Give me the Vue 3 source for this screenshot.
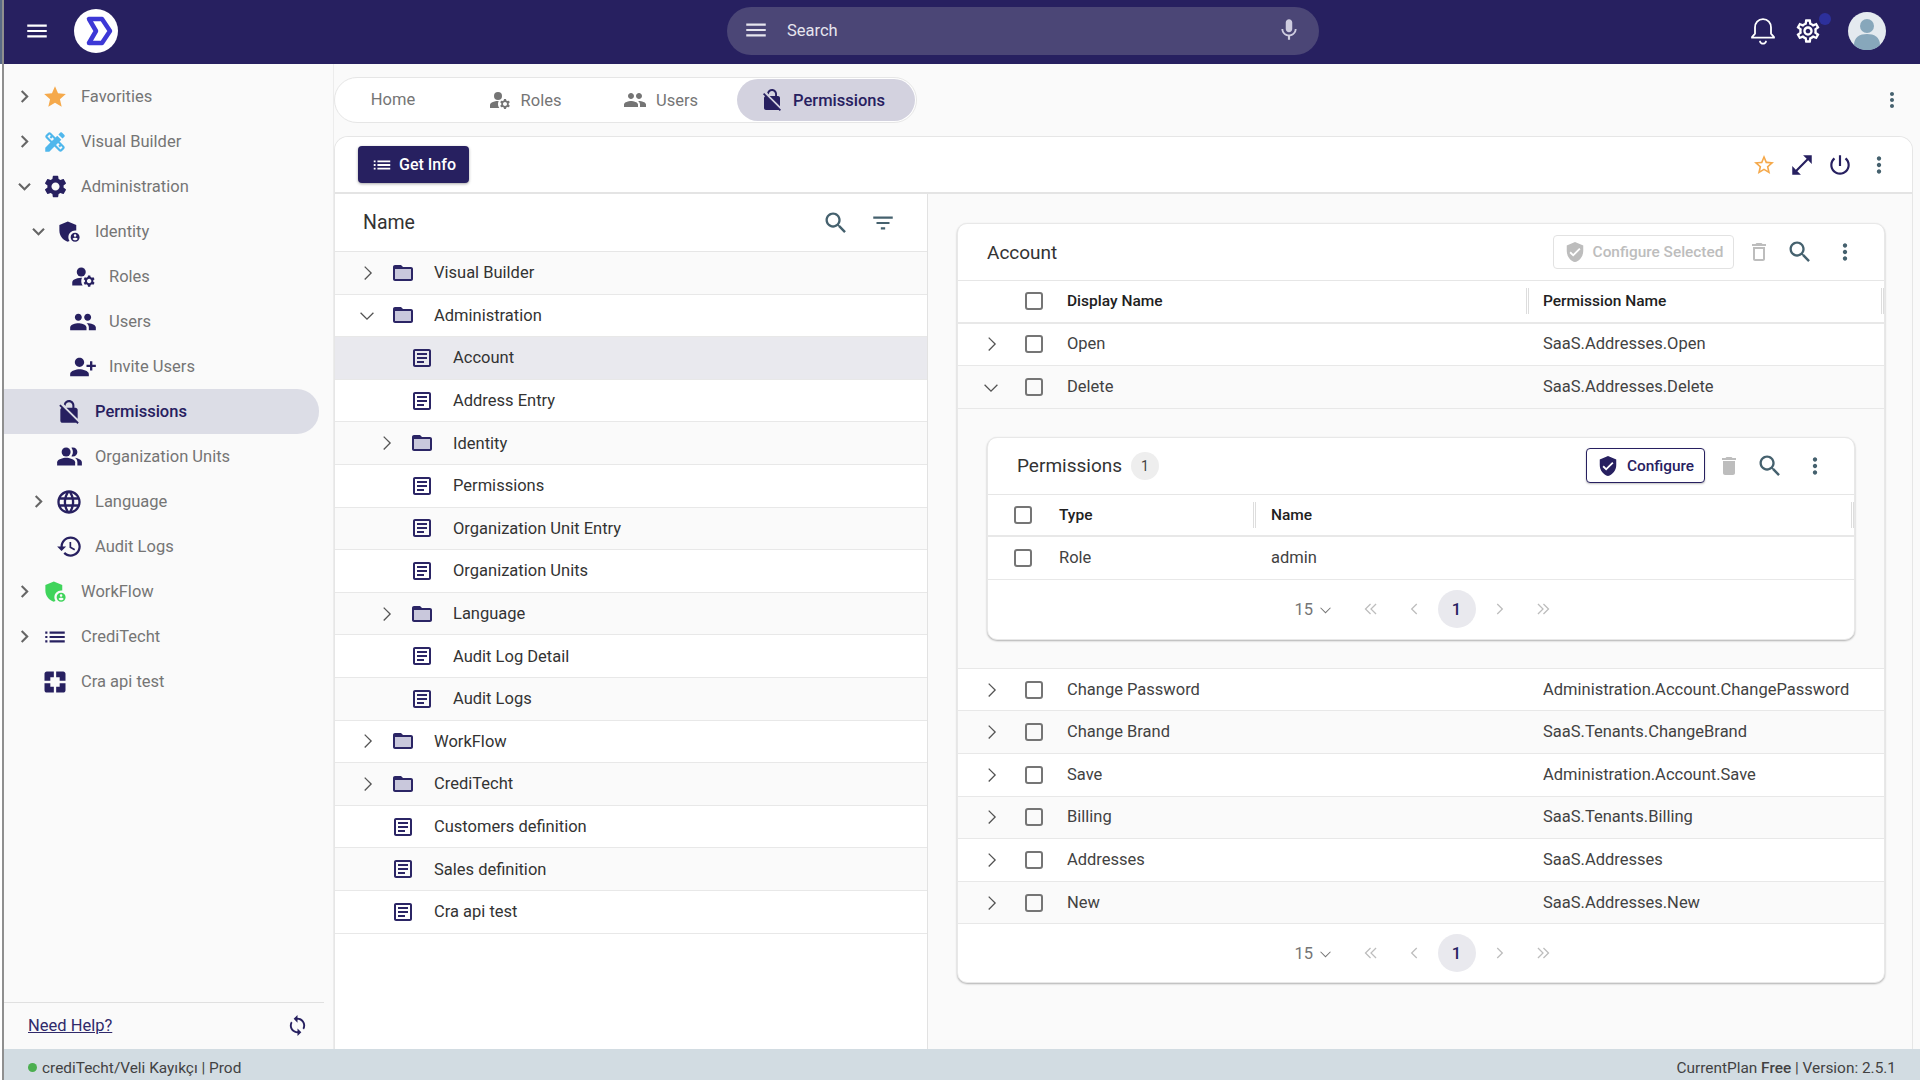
<script setup>
import { h } from 'vue'

const paths = {
  menu: ['M3 18h18v-2H3v2zm0-5h18v-2H3v2zm0-7v2h18V6H3z'],
  chevron: ['M10 6L8.59 7.41 13.17 12l-4.58 4.59L10 18l6-6z'],
  thin: ['M9 5.5l1-1L17.5 12 10 19.5l-1-1 6.5-6.5z'],
  star: ['M12 17.27L18.18 21l-1.64-7.03L22 9.24l-7.19-.61L12 2 9.19 8.63 2 9.24l5.46 4.73L5.82 21z'],
  starLine: ['M22 9.24l-7.19-.62L12 2 9.19 8.63 2 9.24l5.46 4.73L5.82 21 12 17.27 18.18 21l-1.63-7.03L22 9.24zM12 15.4l-3.76 2.27 1-4.28-3.32-2.88 4.38-.38L12 6.1l1.71 4.04 4.38.38-3.32 2.88 1 4.28L12 15.4z'],
  builder: ['M16.24 11.51l1.57-1.57-3.75-3.75-1.57 1.57-4.14-4.13c-.78-.78-2.05-.78-2.83 0l-1.9 1.9c-.78.78-.78 2.05 0 2.83l4.13 4.13L3 17.25V21h3.75l4.76-4.76 4.13 4.13c.95.95 2.23.6 2.83 0l1.9-1.9c.78-.78.78-2.05 0-2.83l-4.13-4.13zm-7.06-.44L5.04 6.94l1.89-1.9L8.2 6.31 7.02 7.5l1.41 1.41 1.19-1.19 1.45 1.45-1.89 1.9zm7.88 7.89l-4.13-4.14 1.9-1.9 1.45 1.45-1.19 1.19 1.41 1.41 1.19-1.19 1.27 1.27-1.9 1.91zM20.71 7.04c.39-.39.39-1.02 0-1.41l-2.34-2.34c-.47-.47-1.12-.29-1.41 0l-1.83 1.83 3.75 3.75 1.83-1.83z'],
  gear: ['M19.14 12.94c.04-.3.06-.61.06-.94 0-.32-.02-.64-.07-.94l2.03-1.58c.18-.14.23-.41.12-.61l-1.92-3.32c-.12-.22-.37-.29-.59-.22l-2.39.96c-.5-.38-1.03-.7-1.62-.94l-.36-2.54c-.04-.24-.24-.41-.48-.41h-3.84c-.24 0-.43.17-.47.41l-.36 2.54c-.59.24-1.13.57-1.62.94l-2.39-.96c-.22-.08-.47 0-.59.22L2.74 8.87c-.12.21-.08.47.12.61l2.03 1.58c-.05.3-.09.63-.09.94s.02.64.07.94l-2.03 1.58c-.18.14-.23.41-.12.61l1.92 3.32c.12.22.37.29.59.22l2.39-.96c.5.38 1.03.7 1.62.94l.36 2.54c.05.24.24.41.48.41h3.84c.24 0 .44-.17.47-.41l.36-2.54c.59-.24 1.13-.56 1.62-.94l2.39.96c.22.08.47 0 .59-.22l1.92-3.32c.12-.22.07-.47-.12-.61l-2.01-1.58zM12 15.6c-1.98 0-3.6-1.62-3.6-3.6s1.62-3.6 3.6-3.6 3.6 1.62 3.6 3.6-1.62 3.6-3.6 3.6z'],
  gearLine: ['M19.43 12.98c.04-.32.07-.64.07-.98 0-.34-.03-.66-.07-.98l2.11-1.65c.19-.15.24-.42.12-.64l-2-3.46c-.09-.16-.26-.25-.44-.25-.06 0-.12.01-.17.03l-2.49 1c-.52-.4-1.08-.73-1.69-.98l-.38-2.65C14.46 2.18 14.25 2 14 2h-4c-.25 0-.46.18-.49.42l-.38 2.65c-.61.25-1.17.59-1.69.98l-2.49-1c-.06-.02-.12-.03-.18-.03-.17 0-.34.09-.43.25l-2 3.46c-.13.22-.07.49.12.64l2.11 1.65c-.04.32-.07.65-.07.98 0 .33.03.66.07.98l-2.11 1.65c-.19.15-.24.42-.12.64l2 3.46c.09.16.26.25.44.25.06 0 .12-.01.17-.03l2.49-1c.52.4 1.08.73 1.69.98l.38 2.65c.03.24.24.42.49.42h4c.25 0 .46-.18.49-.42l.38-2.65c.61-.25 1.17-.59 1.69-.98l2.49 1c.06.02.12.03.18.03.17 0 .34-.09.43-.25l2-3.46c.12-.22.07-.49-.12-.64l-2.11-1.65zm-1.98-1.71c.04.31.05.52.05.73 0 .21-.02.43-.05.73l-.14 1.13.89.7 1.08.84-.7 1.21-1.27-.51-1.04-.42-.9.68c-.43.32-.84.56-1.25.73l-1.06.43-.16 1.13-.2 1.35h-1.4l-.19-1.35-.16-1.13-1.06-.43c-.43-.18-.83-.41-1.23-.71l-.91-.7-1.06.43-1.27.51-.7-1.21 1.08-.84.89-.7-.14-1.13c-.03-.31-.05-.54-.05-.74s.02-.43.05-.73l.14-1.13-.89-.7-1.08-.84.7-1.21 1.27.51 1.04.42.9-.68c.43-.32.84-.56 1.25-.73l1.06-.43.16-1.13.2-1.35h1.39l.19 1.35.16 1.13 1.06.43c.43.18.83.41 1.23.71l.91.7 1.06-.43 1.27-.51.7 1.21-1.07.85-.89.7.14 1.13zM12 8c-2.21 0-4 1.79-4 4s1.79 4 4 4 4-1.79 4-4-1.79-4-4-4zm0 6c-1.1 0-2-.9-2-2s.9-2 2-2 2 .9 2 2-.9 2-2 2z'],
  shield: [
    'M17 11c.34 0 .67.04 1 .09V6.27L10.5 3 3 6.27v4.91c0 4.54 3.2 8.79 7.5 9.82.55-.13 1.08-.32 1.6-.55-.69-.98-1.1-2.17-1.1-3.45 0-3.31 2.69-6 6-6z',
    'M17 13c-2.21 0-4 1.79-4 4s1.79 4 4 4 4-1.79 4-4-1.79-4-4-4zm0 1.38c.62 0 1.12.51 1.12 1.12s-.51 1.12-1.12 1.12-1.12-.51-1.12-1.12.5-1.12 1.12-1.12zm0 5.37c-.93 0-1.74-.46-2.24-1.17.05-.72 1.51-1.08 2.24-1.08s2.19.36 2.24 1.08c-.5.71-1.31 1.17-2.24 1.17z'
  ],
  roles: [
    'M10 4a4 4 0 1 0 0 8 4 4 0 0 0 0-8z',
    'M10.67 13.02c-.22-.01-.44-.02-.67-.02-2.42 0-4.68.67-6.61 1.82-.88.52-1.39 1.5-1.39 2.53V20h9.26c-.79-1.13-1.26-2.51-1.26-4 0-1.07.25-2.07.67-2.98z',
    'M20.75 16c0-.22-.03-.42-.06-.63l1.14-1.01-1-1.73-1.45.49c-.32-.27-.68-.48-1.08-.63L18 11h-2l-.3 1.49c-.4.15-.76.36-1.08.63l-1.45-.49-1 1.73 1.14 1.01c-.03.21-.06.41-.06.63s.03.42.06.63l-1.14 1.01 1 1.73 1.45-.49c.32.27.68.48 1.08.63L16 21h2l.3-1.49c.4-.15.76-.36 1.08-.63l1.45.49 1-1.73-1.14-1.01c.03-.21.06-.41.06-.63zM17 18c-1.1 0-2-.9-2-2s.9-2 2-2 2 .9 2 2-.9 2-2 2z'
  ],
  people: ['M16 11c1.66 0 2.99-1.34 2.99-3S17.66 5 16 5c-1.66 0-3 1.34-3 3s1.34 3 3 3zm-8 0c1.66 0 2.99-1.34 2.99-3S9.66 5 8 5C6.34 5 5 6.34 5 8s1.34 3 3 3zm0 2c-2.33 0-7 1.17-7 3.5V19h14v-2.5c0-2.33-4.67-3.5-7-3.5zm8 0c-.29 0-.62.02-.97.05 1.16.84 1.97 1.97 1.97 3.45V19h6v-2.5c0-2.33-4.67-3.5-7-3.5z'],
  invite: ['M15 12c2.21 0 4-1.79 4-4s-1.79-4-4-4-4 1.79-4 4 1.79 4 4 4zm-9-2V7H4v3H1v2h3v3h2v-3h3v-2H6zm9 4c-2.67 0-8 1.34-8 4v2h16v-2c0-2.66-5.33-4-8-4z'],
  lock: ['M21 21.78L4.22 5 3 6.22l2.04 2.04C4.42 8.6 4 9.25 4 10v10c0 1.1.9 2 2 2h12c.23 0 .45-.05.66-.12L19.78 23 21 21.78zM8.9 6c0-1.71 1.39-3.1 3.1-3.1s3.1 1.39 3.1 3.1v2H9.66L20 18.34V10c0-1.1-.9-2-2-2h-1V6c0-2.76-2.24-5-5-5-2.32 0-4.26 1.59-4.82 3.74L8.9 6.46V6z'],
  units: [
    'M16.67 13.13C18.04 14.06 19 15.32 19 17v3h4v-3c0-2.18-3.57-3.47-6.33-3.87z',
    'M9 4a4 4 0 1 0 0 8 4 4 0 0 0 0-8z',
    'M15 12c2.21 0 4-1.79 4-4s-1.79-4-4-4c-.47 0-.91.1-1.33.24C14.5 5.27 15 6.58 15 8s-.5 2.73-1.33 3.76c.42.14.86.24 1.33.24z',
    'M9 13c-2.67 0-8 1.34-8 4v3h16v-3c0-2.66-5.33-4-8-4z'
  ],
  globe: ['M11.99 2C6.47 2 2 6.48 2 12s4.47 10 9.99 10C17.52 22 22 17.52 22 12S17.52 2 11.99 2zm6.93 6h-2.95c-.32-1.25-.78-2.45-1.38-3.56 1.84.63 3.37 1.91 4.33 3.56zM12 4.04c.83 1.2 1.48 2.53 1.91 3.96h-3.82c.43-1.43 1.08-2.76 1.91-3.96zM4.26 14C4.1 13.36 4 12.69 4 12s.1-1.36.26-2h3.38c-.08.66-.14 1.32-.14 2 0 .68.06 1.34.14 2H4.26zm.82 2h2.95c.32 1.25.78 2.45 1.38 3.56-1.84-.63-3.37-1.9-4.33-3.56zm2.95-8H5.08c.96-1.66 2.49-2.93 4.33-3.56C8.81 5.55 8.35 6.75 8.03 8zM12 19.96c-.83-1.2-1.48-2.53-1.91-3.96h3.82c-.43 1.43-1.08 2.76-1.91 3.96zM14.34 14H9.66c-.09-.66-.16-1.32-.16-2 0-.68.07-1.35.16-2h4.68c.09.65.16 1.32.16 2 0 .68-.07 1.34-.16 2zm.25 5.56c.6-1.11 1.06-2.31 1.38-3.56h2.95c-.96 1.65-2.49 2.93-4.33 3.56zM16.36 14c.08-.66.14-1.32.14-2 0-.68-.06-1.34-.14-2h3.38c.16.64.26 1.31.26 2s-.1 1.36-.26 2h-3.38z'],
  history: ['M13 3c-4.97 0-9 4.03-9 9H1l3.89 3.89.07.14L9 12H6c0-3.87 3.13-7 7-7s7 3.13 7 7-3.13 7-7 7c-1.93 0-3.68-.79-4.94-2.06l-1.42 1.42C8.27 19.99 10.51 21 13 21c4.97 0 9-4.03 9-9s-4.03-9-9-9zm-1 5v5l4.28 2.54.72-1.21-3.5-2.08V8H12z'],
  list: ['M3 13h2v-2H3v2zm0 4h2v-2H3v2zm0-8h2V7H3v2zm4 4h14v-2H7v2zm0 4h14v-2H7v2zM7 7v2h14V7H7z'],
  craTest: [
    'M5 3h6v5H8v3H3V5c0-1.1.9-2 2-2z',
    'M13 3h6c1.1 0 2 .9 2 2v6h-5V8h-3z',
    'M3 13h5v3h3v5H5c-1.1 0-2-.9-2-2z',
    'M16 13h5v6c0 1.1-.9 2-2 2h-6v-5h3z'
  ],
  sync: ['M12 4V1L8 5l4 4V6c3.31 0 6 2.69 6 6 0 1.01-.25 1.97-.7 2.8l1.46 1.46C19.54 15.03 20 13.57 20 12c0-4.42-3.58-8-8-8zm0 14c-3.31 0-6-2.69-6-6 0-1.01.25-1.97.7-2.8L5.24 7.74C4.46 8.97 4 10.43 4 12c0 4.42 3.58 8 8 8v3l4-4-4-4v3z'],
  search: ['M15.5 14h-.79l-.28-.27C15.41 12.59 16 11.11 16 9.5 16 5.91 13.09 3 9.5 3S3 5.91 3 9.5 5.91 16 9.5 16c1.61 0 3.09-.59 4.23-1.57l.27.28v.79l5 4.99L20.49 19l-4.99-5zm-6 0C7.01 14 5 11.99 5 9.5S7.01 5 9.5 5 14 7.01 14 9.5 11.99 14 9.5 14z'],
  filter: ['M10 18h4v-2h-4v2zM3 6v2h18V6H3zm3 7h12v-2H6v2z'],
  kebab: ['M12 8c1.1 0 2-.9 2-2s-.9-2-2-2-2 .9-2 2 .9 2 2 2zm0 2c-1.1 0-2 .9-2 2s.9 2 2 2 2-.9 2-2-.9-2-2-2zm0 6c-1.1 0-2 .9-2 2s.9 2 2 2 2-.9 2-2-.9-2-2-2z'],
  mic: ['M12 14c1.66 0 2.99-1.34 2.99-3L15 5c0-1.66-1.34-3-3-3S9 3.34 9 5v6c0 1.66 1.34 3 3 3zm5.3-3c0 3-2.54 5.1-5.3 5.1S6.7 14 6.7 11H5c0 3.41 2.72 6.23 6 6.72V21h2v-3.28c3.28-.48 6-3.3 6-6.72h-1.7z'],
  power: ['M13 3h-2v10h2V3zm4.83 2.17l-1.42 1.42C17.99 7.86 19 9.81 19 12c0 3.87-3.13 7-7 7s-7-3.13-7-7c0-2.19 1.01-4.14 2.58-5.42L6.17 5.17C4.23 6.82 3 9.26 3 12c0 4.97 4.03 9 9 9s9-4.03 9-9c0-2.74-1.23-5.18-3.17-6.83z'],
  expand: ['M21 11V3h-8l3.29 3.29-10 10L3 13v8h8l-3.29-3.29 10-10z'],
  verified: ['M12 1L3 5v6c0 5.55 3.84 10.74 9 12 5.16-1.26 9-6.45 9-12V5l-9-4zm-2 16l-4-4 1.41-1.41L10 14.17l6.59-6.59L18 9l-8 8z'],
  trash: ['M6 19c0 1.1.9 2 2 2h8c1.1 0 2-.9 2-2V7H6v12zM19 4h-3.5l-1-1h-5l-1 1H5v2h14V4z'],
  trashLine: ['M6 19c0 1.1.9 2 2 2h8c1.1 0 2-.9 2-2V7H6v12zM8 9h8v10H8V9zm7.5-5l-1-1h-5l-1 1H5v2h14V4h-3.5z'],
  article: ['M19 3H5c-1.1 0-2 .9-2 2v14c0 1.1.9 2 2 2h14c1.1 0 2-.9 2-2V5c0-1.1-.9-2-2-2zm0 16H5V5h14v14z', 'M7 7h10v2H7zm0 4h10v2H7zm0 4h7v2H7z'],
  left: ['M14.5 6l1 1-5 5 5 5-1 1-6-6z'],
  dblLeft: ['M11 6l1 1-5 5 5 5-1 1-6-6z', 'M17 6l1 1-5 5 5 5-1 1-6-6z']
}

const Icon = (props) =>
  h(
    'svg',
    { viewBox: '0 0 24 24', width: props.size || 24, height: props.size || 24, fill: 'currentColor' },
    paths[props.name].map((d) => h('path', { d }))
  )
Icon.props = ['name', 'size']

const menuItems = [
  { label: 'Favorities', icon: 'star', level: 0, arrow: 'right', tone: 'orange', size: 26 },
  { label: 'Visual Builder', icon: 'builder', level: 0, arrow: 'right', tone: 'sky', size: 26 },
  { label: 'Administration', icon: 'gear', level: 0, arrow: 'down', size: 27 },
  { label: 'Identity', icon: 'shield', level: 1, arrow: 'down', size: 27 },
  { label: 'Roles', icon: 'roles', level: 2, size: 27 },
  { label: 'Users', icon: 'people', level: 2, size: 28 },
  { label: 'Invite Users', icon: 'invite', level: 2, size: 28, flip: true },
  { label: 'Permissions', icon: 'lock', level: 1, active: true, size: 26 },
  { label: 'Organization Units', icon: 'units', level: 1, size: 27 },
  { label: 'Language', icon: 'globe', level: 1, arrow: 'right', size: 28 },
  { label: 'Audit Logs', icon: 'history', level: 1, size: 27 },
  { label: 'WorkFlow', icon: 'shield', level: 0, arrow: 'right', tone: 'green', size: 27 },
  { label: 'CrediTecht', icon: 'list', level: 0, arrow: 'right', size: 26 },
  { label: 'Cra api test', icon: 'craTest', level: 0, size: 28 }
]

const tabs = [
  { label: 'Home', cls: 'tab-home' },
  { label: 'Roles', icon: 'roles', cls: 'tab-roles' },
  { label: 'Users', icon: 'people', cls: 'tab-users' },
  { label: 'Permissions', icon: 'lock', cls: 'tab-perm', active: true }
]

const treeItems = [
  { label: 'Visual Builder', level: 0, folder: true, arrow: 'right' },
  { label: 'Administration', level: 0, folder: true, arrow: 'down' },
  { label: 'Account', level: 1, selected: true },
  { label: 'Address Entry', level: 1 },
  { label: 'Identity', level: 1, folder: true, arrow: 'right' },
  { label: 'Permissions', level: 1 },
  { label: 'Organization Unit Entry', level: 1 },
  { label: 'Organization Units', level: 1 },
  { label: 'Language', level: 1, folder: true, arrow: 'right' },
  { label: 'Audit Log Detail', level: 1 },
  { label: 'Audit Logs', level: 1 },
  { label: 'WorkFlow', level: 0, folder: true, arrow: 'right' },
  { label: 'CrediTecht', level: 0, folder: true, arrow: 'right' },
  { label: 'Customers definition', level: 0 },
  { label: 'Sales definition', level: 0 },
  { label: 'Cra api test', level: 0 }
]

const permissionRows = [
  { name: 'Open', key: 'SaaS.Addresses.Open' },
  { name: 'Delete', key: 'SaaS.Addresses.Delete', open: true },
  { name: 'Change Password', key: 'Administration.Account.ChangePassword' },
  { name: 'Change Brand', key: 'SaaS.Tenants.ChangeBrand' },
  { name: 'Save', key: 'Administration.Account.Save' },
  { name: 'Billing', key: 'SaaS.Tenants.Billing' },
  { name: 'Addresses', key: 'SaaS.Addresses' },
  { name: 'New', key: 'SaaS.Addresses.New' }
]
</script>

<template>
  <div class="app">
    <div class="edge"></div>
    <div class="shell">
      <header class="topbar">
        <Icon name="menu" class="top-menu" :size="26" />
        <div class="logo">
          <svg viewBox="0 0 44 44" width="44" height="44">
            <path d="M15 10h13l8 12-8 12H15l7-12z" fill="none" stroke="#3d38d6" stroke-width="4.5" stroke-linejoin="round" />
          </svg>
        </div>
        <div class="search-pill">
          <Icon name="menu" :size="26" />
          <span class="search-text">Search</span>
          <Icon name="mic" class="mic" :size="26" />
        </div>
        <div class="top-right">
          <svg viewBox="0 0 28 30" width="28" height="30" fill="none" stroke="#fff">
            <path d="M14 3.2c-5 0-8 3.8-8 8.3v6.2l-3 3.4v.6h22v-.6l-3-3.4v-6.2c0-4.5-3-8.3-8-8.3z" stroke-width="1.8" stroke-linejoin="round" />
            <path d="M11 25.500c.5 1.500 1.600 2.200 3 2.200s2.500-.7 3-2.200" stroke-width="1.800" stroke-linecap="round" />
          </svg>
          <span class="gear-wrap">
            <Icon name="gearLine" :size="28" />
            <span class="gear-dot"></span>
          </span>
          <span class="avatar">
            <svg viewBox="0 0 38 38" width="38" height="38">
              <circle cx="19" cy="19" r="19" fill="#e4eaef" />
              <circle cx="19" cy="14" r="7" fill="#87a7bb" />
              <path d="M6 33c0-8 6-11 13-11s13 3 13 11a19 19 0 0 1-26 0z" fill="#87a7bb" />
            </svg>
          </span>
        </div>
      </header>

      <div class="body">
        <aside class="sidebar">
          <nav class="menu">
            <div
              v-for="item in menuItems"
              :key="item.label"
              class="menu-row"
              :class="['lv' + item.level, { active: item.active }]"
            >
              <span class="arrow-slot">
                <Icon v-if="item.arrow" name="chevron" :class="{ down: item.arrow === 'down' }" :size="25" />
              </span>
              <span class="menu-icon" :class="item.tone">
                <Icon :name="item.icon" :size="item.size" :class="{ flip: item.flip }" />
              </span>
              <span class="menu-label">{{ item.label }}</span>
            </div>
          </nav>
          <div class="side-foot">
            <a class="help">Need Help?</a>
            <Icon name="sync" :size="23" class="sync" />
          </div>
        </aside>

        <main class="main">
          <div class="tabs-row">
            <div class="tabs">
              <div v-for="tab in tabs" :key="tab.label" class="tab" :class="[tab.cls, { active: tab.active }]">
                <Icon v-if="tab.icon" :name="tab.icon" :size="24" />
                <span>{{ tab.label }}</span>
              </div>
            </div>
            <Icon name="kebab" class="slate tabs-kebab" />
          </div>

          <section class="page">
            <div class="toolbar">
              <button class="get-info">
                <Icon name="list" :size="22" />
                <span>Get Info</span>
              </button>
              <div class="tool-icons">
                <Icon name="starLine" class="orange" :size="24" />
                <Icon name="expand" class="navy tool-expand" :size="26" />
                <Icon name="power" class="navy" :size="26" />
                <Icon name="kebab" class="slate tool-kebab" :size="26" />
              </div>
            </div>

            <div class="split">
              <div class="tree">
                <div class="tree-head">
                  <span class="tree-title">Name</span>
                  <Icon name="search" class="slate tree-search" :size="28" />
                  <Icon name="filter" class="slate tree-filter" :size="26" />
                </div>
                <div
                  v-for="node in treeItems"
                  :key="node.label + node.level"
                  class="tree-row"
                  :class="['tree-lv' + node.level, { selected: node.selected }]"
                >
                  <span class="tree-arrow">
                    <Icon v-if="node.arrow" name="thin" :class="{ down: node.arrow === 'down' }" :size="22" />
                  </span>
                  <span class="tree-icon">
                    <svg v-if="node.folder" viewBox="0 0 24 24" width="24" height="24">
                      <path d="M4 8h16v10H4z" fill="#c9c8dc" />
                      <path fill="#2b2565" d="M20 6h-8l-2-2H4c-1.1 0-1.99.9-1.99 2L2 18c0 1.1.9 2 2 2h16c1.1 0 2-.9 2-2V8c0-1.1-.9-2-2-2zm0 12H4V8h16v10z" />
                    </svg>
                    <Icon v-else name="article" />
                  </span>
                  <span class="tree-label">{{ node.label }}</span>
                </div>
              </div>

              <div class="detail">
                <div class="card">
                  <div class="card-head">
                    <span class="card-title">Account</span>
                    <button class="configure-off">
                      <Icon name="verified" :size="22" />
                      <span>Configure Selected</span>
                    </button>
                    <Icon name="trashLine" class="muted trash-first" :size="24" />
                    <Icon name="search" class="slate gap-search" :size="28" />
                    <Icon name="kebab" class="slate gap-kebab" :size="26" />
                  </div>

                  <div class="grid-head">
                    <span class="arrow-cell"></span>
                    <span class="check"></span>
                    <span class="col-name grip">Display Name</span>
                    <span class="col-key grip">Permission Name</span>
                  </div>

                  <template v-for="(row, i) in permissionRows" :key="row.name">
                    <div class="grid-row" :class="{ alt: i % 2 === 1 }">
                      <span class="arrow-cell">
                        <Icon name="thin" :class="{ down: row.open }" :size="22" />
                      </span>
                      <span class="check"></span>
                      <span class="col-name">{{ row.name }}</span>
                      <span class="col-key">{{ row.key }}</span>
                    </div>

                    <div v-if="row.open" class="row-detail">
                      <div class="inner-card">
                        <div class="card-head inner-head">
                          <span class="card-title">Permissions</span>
                          <span class="count">1</span>
                          <button class="configure">
                            <Icon name="verified" :size="22" />
                            <span>Configure</span>
                          </button>
                          <Icon name="trash" class="muted trash-first" :size="24" />
                          <Icon name="search" class="slate gap-search" :size="28" />
                          <Icon name="kebab" class="slate gap-kebab" :size="26" />
                        </div>
                        <div class="grid-head inner-row">
                          <span class="check"></span>
                          <span class="col-type grip">Type</span>
                          <span class="col-user grip">Name</span>
                        </div>
                        <div class="grid-row inner-row">
                          <span class="check"></span>
                          <span class="col-type">Role</span>
                          <span class="col-user">admin</span>
                        </div>
                        <div class="pager inner-pager">
                          <span class="page-size">15 <Icon name="thin" class="down" :size="17" /></span>
                          <span class="page-btn"><Icon name="dblLeft" :size="22" /></span>
                          <span class="page-btn"><Icon name="left" :size="22" /></span>
                          <span class="page-btn current">1</span>
                          <span class="page-btn"><Icon name="left" class="flip" :size="22" /></span>
                          <span class="page-btn"><Icon name="dblLeft" class="flip" :size="22" /></span>
                        </div>
                      </div>
                    </div>
                  </template>

                  <div class="pager">
                    <span class="page-size">15 <Icon name="thin" class="down" :size="17" /></span>
                    <span class="page-btn"><Icon name="dblLeft" :size="22" /></span>
                    <span class="page-btn"><Icon name="left" :size="22" /></span>
                    <span class="page-btn current">1</span>
                    <span class="page-btn"><Icon name="left" class="flip" :size="22" /></span>
                    <span class="page-btn"><Icon name="dblLeft" class="flip" :size="22" /></span>
                  </div>
                </div>
              </div>
            </div>
          </section>
        </main>
      </div>

      <footer class="status">
        <span class="dot"></span>
        <span>crediTecht/Veli Kayıkçı | Prod</span>
        <span class="status-right">CurrentPlan <b>Free</b> | Version: 2.5.1</span>
      </footer>
    </div>
  </div>
</template>

<style>
html,
body {
  margin: 0;
  background: #fff;
}
</style>

<style scoped>
.app {
  width: 1920px;
  height: 1080px;
  display: flex;
  overflow: hidden;
  font-family: Roboto, "Liberation Sans", sans-serif;
  font-size: 16.5px;
  color: #333;
}

svg {
  display: block;
  flex-shrink: 0;
}

.flip {
  transform: scaleX(-1);
}

.down {
  transform: rotate(90deg);
}

.edge {
  width: 4px;
  flex-shrink: 0;
  box-sizing: border-box;
  border-right: 2px solid #8f8f8f;
  background: linear-gradient(#5a6a86 0, #5a6a86 64px, #fff 64px);
}

.shell {
  flex: 1;
  min-width: 0;
  display: flex;
  flex-direction: column;
}

.orange {
  color: #f5a94b;
}

.sky {
  color: #4fb7ec;
}

.green {
  color: #3fd45b;
}

.navy {
  color: #272060;
}

.slate {
  color: #45616e;
}

.muted {
  color: #bdbdbd;
}

/* header */
.topbar {
  height: 64px;
  flex-shrink: 0;
  display: flex;
  align-items: center;
  background: #272060;
  color: #fff;
  padding: 0 34px 2px 20px;
  box-sizing: border-box;
}

.logo {
  width: 44px;
  height: 44px;
  margin-left: 24px;
  border-radius: 50%;
  background: #fff;
}

.search-pill {
  width: 592px;
  height: 48px;
  margin-left: 609px;
  padding: 0 17px 2px 16px;
  box-sizing: border-box;
  display: flex;
  align-items: center;
  border-radius: 24px;
  background: #4b4676;
  color: #e6e5ee;
}

.search-text {
  margin-left: 18px;
  font-size: 16.5px;
}

.mic {
  margin-left: auto;
  color: #cfcde0;
}

.top-right {
  margin-left: auto;
  display: flex;
  align-items: center;
}

.gear-wrap {
  position: relative;
  margin-left: 17px;
}

.gear-dot {
  position: absolute;
  top: -4px;
  right: -9px;
  width: 12px;
  height: 12px;
  border-radius: 50%;
  background: #2d309c;
}

.avatar {
  margin-left: 26px;
}

.body {
  flex: 1;
  min-height: 0;
  display: flex;
}

/* sidebar */
.sidebar {
  width: 330px;
  flex-shrink: 0;
  box-sizing: border-box;
  display: flex;
  flex-direction: column;
  background: #fafafa;
  border-right: 1px solid #ececec;
}

.menu {
  padding-top: 10px;
  flex: 1;
}

.menu-row {
  height: 45px;
  width: 315px;
  box-sizing: border-box;
  display: flex;
  align-items: center;
  color: #757575;
}

.menu-row.active {
  background: #dcdde6;
  border-radius: 0 22px 22px 0;
  color: #272060;
  font-weight: 500;
}

.lv0 {
  padding-left: 10px;
}

.lv1 {
  padding-left: 24px;
}

.lv2 {
  padding-left: 38px;
}

.arrow-slot {
  width: 20px;
  display: flex;
  justify-content: center;
  color: #666;
}

.menu-icon {
  width: 24px;
  margin-left: 9px;
  margin-right: 14px;
  display: flex;
  justify-content: center;
  color: #272060;
}

.menu-icon.orange {
  color: #f5a94b;
}

.menu-icon.sky {
  color: #4fb7ec;
}

.menu-icon.green {
  color: #3fd45b;
}

.side-foot {
  height: 47px;
  margin-right: 9px;
  padding: 0 15px 2px 24px;
  display: flex;
  align-items: center;
  justify-content: space-between;
  border-top: 1px solid #e0e0e0;
  box-sizing: border-box;
}

.help {
  color: #302a6b;
  text-decoration: underline;
}

.sync {
  color: #272060;
}

/* tabs */
.main {
  flex: 1;
  min-width: 0;
  display: flex;
  flex-direction: column;
  background: #fafafa;
  padding-top: 13px;
}

.tabs-row {
  display: flex;
  align-items: center;
}

.tabs {
  height: 46px;
  box-sizing: border-box;
  display: flex;
  align-items: center;
  padding: 0 1px;
  border: 1px solid #e6e6e6;
  border-radius: 23px;
  background: #fff;
}

.tab {
  height: 42px;
  box-sizing: border-box;
  display: flex;
  align-items: center;
  justify-content: center;
  gap: 9px;
  color: #757575;
}

.tab-home {
  width: 114px;
  padding-bottom: 2px;
}

.tab-roles {
  width: 152px;
  padding-right: 3px;
}

.tab-users {
  width: 120px;
  margin-right: 15px;
  padding-right: 3px;
}

.tab-perm {
  width: 178px;
  padding-right: 7px;
}

.tab.active {
  background: #d3d2df;
  border-radius: 21px;
  color: #272060;
  font-weight: 500;
}

.tabs-kebab {
  margin-left: auto;
  margin-right: 16px;
}

/* page */
.page {
  flex: 1;
  min-height: 0;
  margin: 13px 7px 0 0;
  display: flex;
  flex-direction: column;
  border: 1px solid #e6e6e6;
  border-bottom: none;
  border-radius: 14px 14px 0 0;
  overflow: hidden;
}

.toolbar {
  height: 57px;
  box-sizing: border-box;
  flex-shrink: 0;
  display: flex;
  align-items: center;
  padding: 0 20px 0 23px;
  background: #fff;
  border-bottom: 2px solid #e4e4e4;
}

.get-info {
  width: 111px;
  height: 37px;
  display: flex;
  align-items: center;
  justify-content: center;
  gap: 6px;
  padding: 0;
  border: none;
  border-radius: 4px;
  background: #272060;
  color: #fff;
  font: 500 16px Roboto, sans-serif;
  box-shadow: 0 1px 3px rgba(0, 0, 0, 0.35);
}

.tool-icons {
  margin-left: auto;
  display: flex;
  align-items: center;
  gap: 12px;
}

.tool-expand {
  margin-left: 1px;
}

.tool-kebab {
  margin-left: 1px;
}

.split {
  flex: 1;
  min-height: 0;
  display: flex;
}

/* tree */
.tree {
  width: 593px;
  flex-shrink: 0;
  box-sizing: border-box;
  background: #fff;
  border-right: 1px solid #e2e2e2;
}

.tree-head {
  height: 58px;
  box-sizing: border-box;
  display: flex;
  align-items: center;
  padding-left: 28px;
  border-bottom: 1px solid #e6e6e6;
}

.tree-title {
  font-size: 19.5px;
  color: #333;
}

.tree-search {
  margin-left: auto;
}

.tree-filter {
  margin: 0 31px 0 20px;
}

.tree-row {
  height: 42.6px;
  box-sizing: border-box;
  display: flex;
  align-items: center;
  border-bottom: 1px solid #e8e8e8;
}

.tree-row:nth-child(even) {
  background: #fafafa;
}

.tree-row.selected {
  background: #e9e9ee;
}

.tree-lv0 {
  padding-left: 22px;
}

.tree-lv1 {
  padding-left: 41px;
}

.tree-arrow {
  width: 20px;
  display: flex;
  justify-content: center;
  color: #555;
}

.tree-icon {
  width: 24px;
  margin: 0 19px 0 14px;
  color: #2b2565;
}

/* detail card */
.detail {
  flex: 1;
  min-width: 0;
  padding: 29px 27px 0 29px;
  background: #fafafa;
}

.card {
  height: 760px;
  box-sizing: border-box;
  background: #fff;
  border: 1px solid #e8e8e8;
  border-radius: 10px;
  box-shadow: 0 1px 2px rgba(0, 0, 0, 0.3);
  overflow: hidden;
}

.card-head {
  height: 57px;
  box-sizing: border-box;
  display: flex;
  align-items: center;
  padding: 0 26px 0 29px;
  border-bottom: 1px solid #e6e6e6;
}

.card-title {
  font-size: 19px;
  color: #333;
}

.configure-off {
  height: 34px;
  width: 181px;
  margin-left: auto;
  margin-right: 1px;
  display: flex;
  align-items: center;
  justify-content: center;
  gap: 7px;
  padding: 0;
  background: #fff;
  border: 1px solid #e2e2e2;
  border-radius: 4px;
  color: #bdbdbd;
  font: 500 15.4px Roboto, sans-serif;
}

.trash-first {
  margin-left: 12px;
}

.gap-search {
  margin-left: 15px;
}

.gap-kebab {
  margin-left: 18px;
}

.grid-head,
.grid-row {
  height: 42.6px;
  box-sizing: border-box;
  display: flex;
  align-items: center;
  border-bottom: 1px solid #e8e8e8;
}

.grid-head {
  border-bottom-width: 2px;
  font-size: 15.5px;
  font-weight: 500;
  color: #212121;
}

.grid-row {
  color: #424242;
}

.grid-row.alt {
  background: #fafafa;
}

.arrow-cell {
  width: 20px;
  margin-left: 23px;
  display: flex;
  justify-content: center;
  color: #555;
}

.check {
  width: 18px;
  height: 18px;
  box-sizing: border-box;
  flex-shrink: 0;
  margin-left: 24px;
  border: 2px solid #757575;
  border-radius: 3px;
}

.col-name {
  width: 462px;
  box-sizing: border-box;
  margin-left: 24px;
  line-height: 26px;
}

.col-key {
  flex: 1;
  margin-left: 14px;
  line-height: 26px;
}

.grip {
  border-right: 3px double #ddd;
}

.row-detail {
  height: 260px;
  box-sizing: border-box;
  padding: 28px 29px 0;
  background: #fafafa;
  border-bottom: 1px solid #e8e8e8;
}

.inner-card {
  height: 203px;
  box-sizing: border-box;
  background: #fff;
  border: 1px solid #e8e8e8;
  border-radius: 10px;
  box-shadow: 0 1px 2px rgba(0, 0, 0, 0.3);
  overflow: hidden;
}

.inner-head .card-title {
  margin-right: 3px;
}

.count {
  width: 28px;
  height: 28px;
  margin-left: 6px;
  border-radius: 50%;
  background: #eee;
  display: flex;
  align-items: center;
  justify-content: center;
  font-size: 14px;
  color: #444;
}

.configure {
  width: 119px;
  height: 35px;
  margin-left: auto;
  display: flex;
  align-items: center;
  justify-content: center;
  gap: 8px;
  padding: 0;
  background: #fff;
  border: 1px solid #272060;
  border-radius: 4px;
  color: #272060;
  font: 500 15.4px Roboto, sans-serif;
  box-shadow: 0 1px 2px rgba(0, 0, 0, 0.25);
}

.inner-row .check {
  margin-left: 26px;
}

.col-type {
  width: 197px;
  box-sizing: border-box;
  margin-left: 27px;
  line-height: 26px;
}

.col-user {
  flex: 1;
  margin-left: 15px;
  line-height: 26px;
}

.pager {
  height: 58px;
  display: flex;
  align-items: center;
  justify-content: center;
  gap: 5px;
  padding-left: 14px;
}

.inner-pager {
  height: 59px;
}

.page-size {
  display: flex;
  align-items: center;
  gap: 4px;
  width: 52px;
  color: #757575;
}

.page-btn {
  width: 38px;
  height: 38px;
  display: flex;
  align-items: center;
  justify-content: center;
  color: #bdbdbd;
}

.page-btn.current {
  border-radius: 50%;
  background: #e9e9ee;
  color: #272060;
  font-weight: 500;
}

/* status bar */
.status {
  height: 31px;
  flex-shrink: 0;
  box-sizing: border-box;
  display: flex;
  align-items: center;
  padding: 6px 24px 0;
  background: #d2dce2;
  font-size: 15.4px;
  color: #424242;
}

.dot {
  width: 9px;
  height: 9px;
  margin-right: 5px;
  border-radius: 50%;
  background: #4caf50;
}

.status-right {
  margin-left: auto;
}

.status-right b {
  font-weight: 500;
}
</style>
